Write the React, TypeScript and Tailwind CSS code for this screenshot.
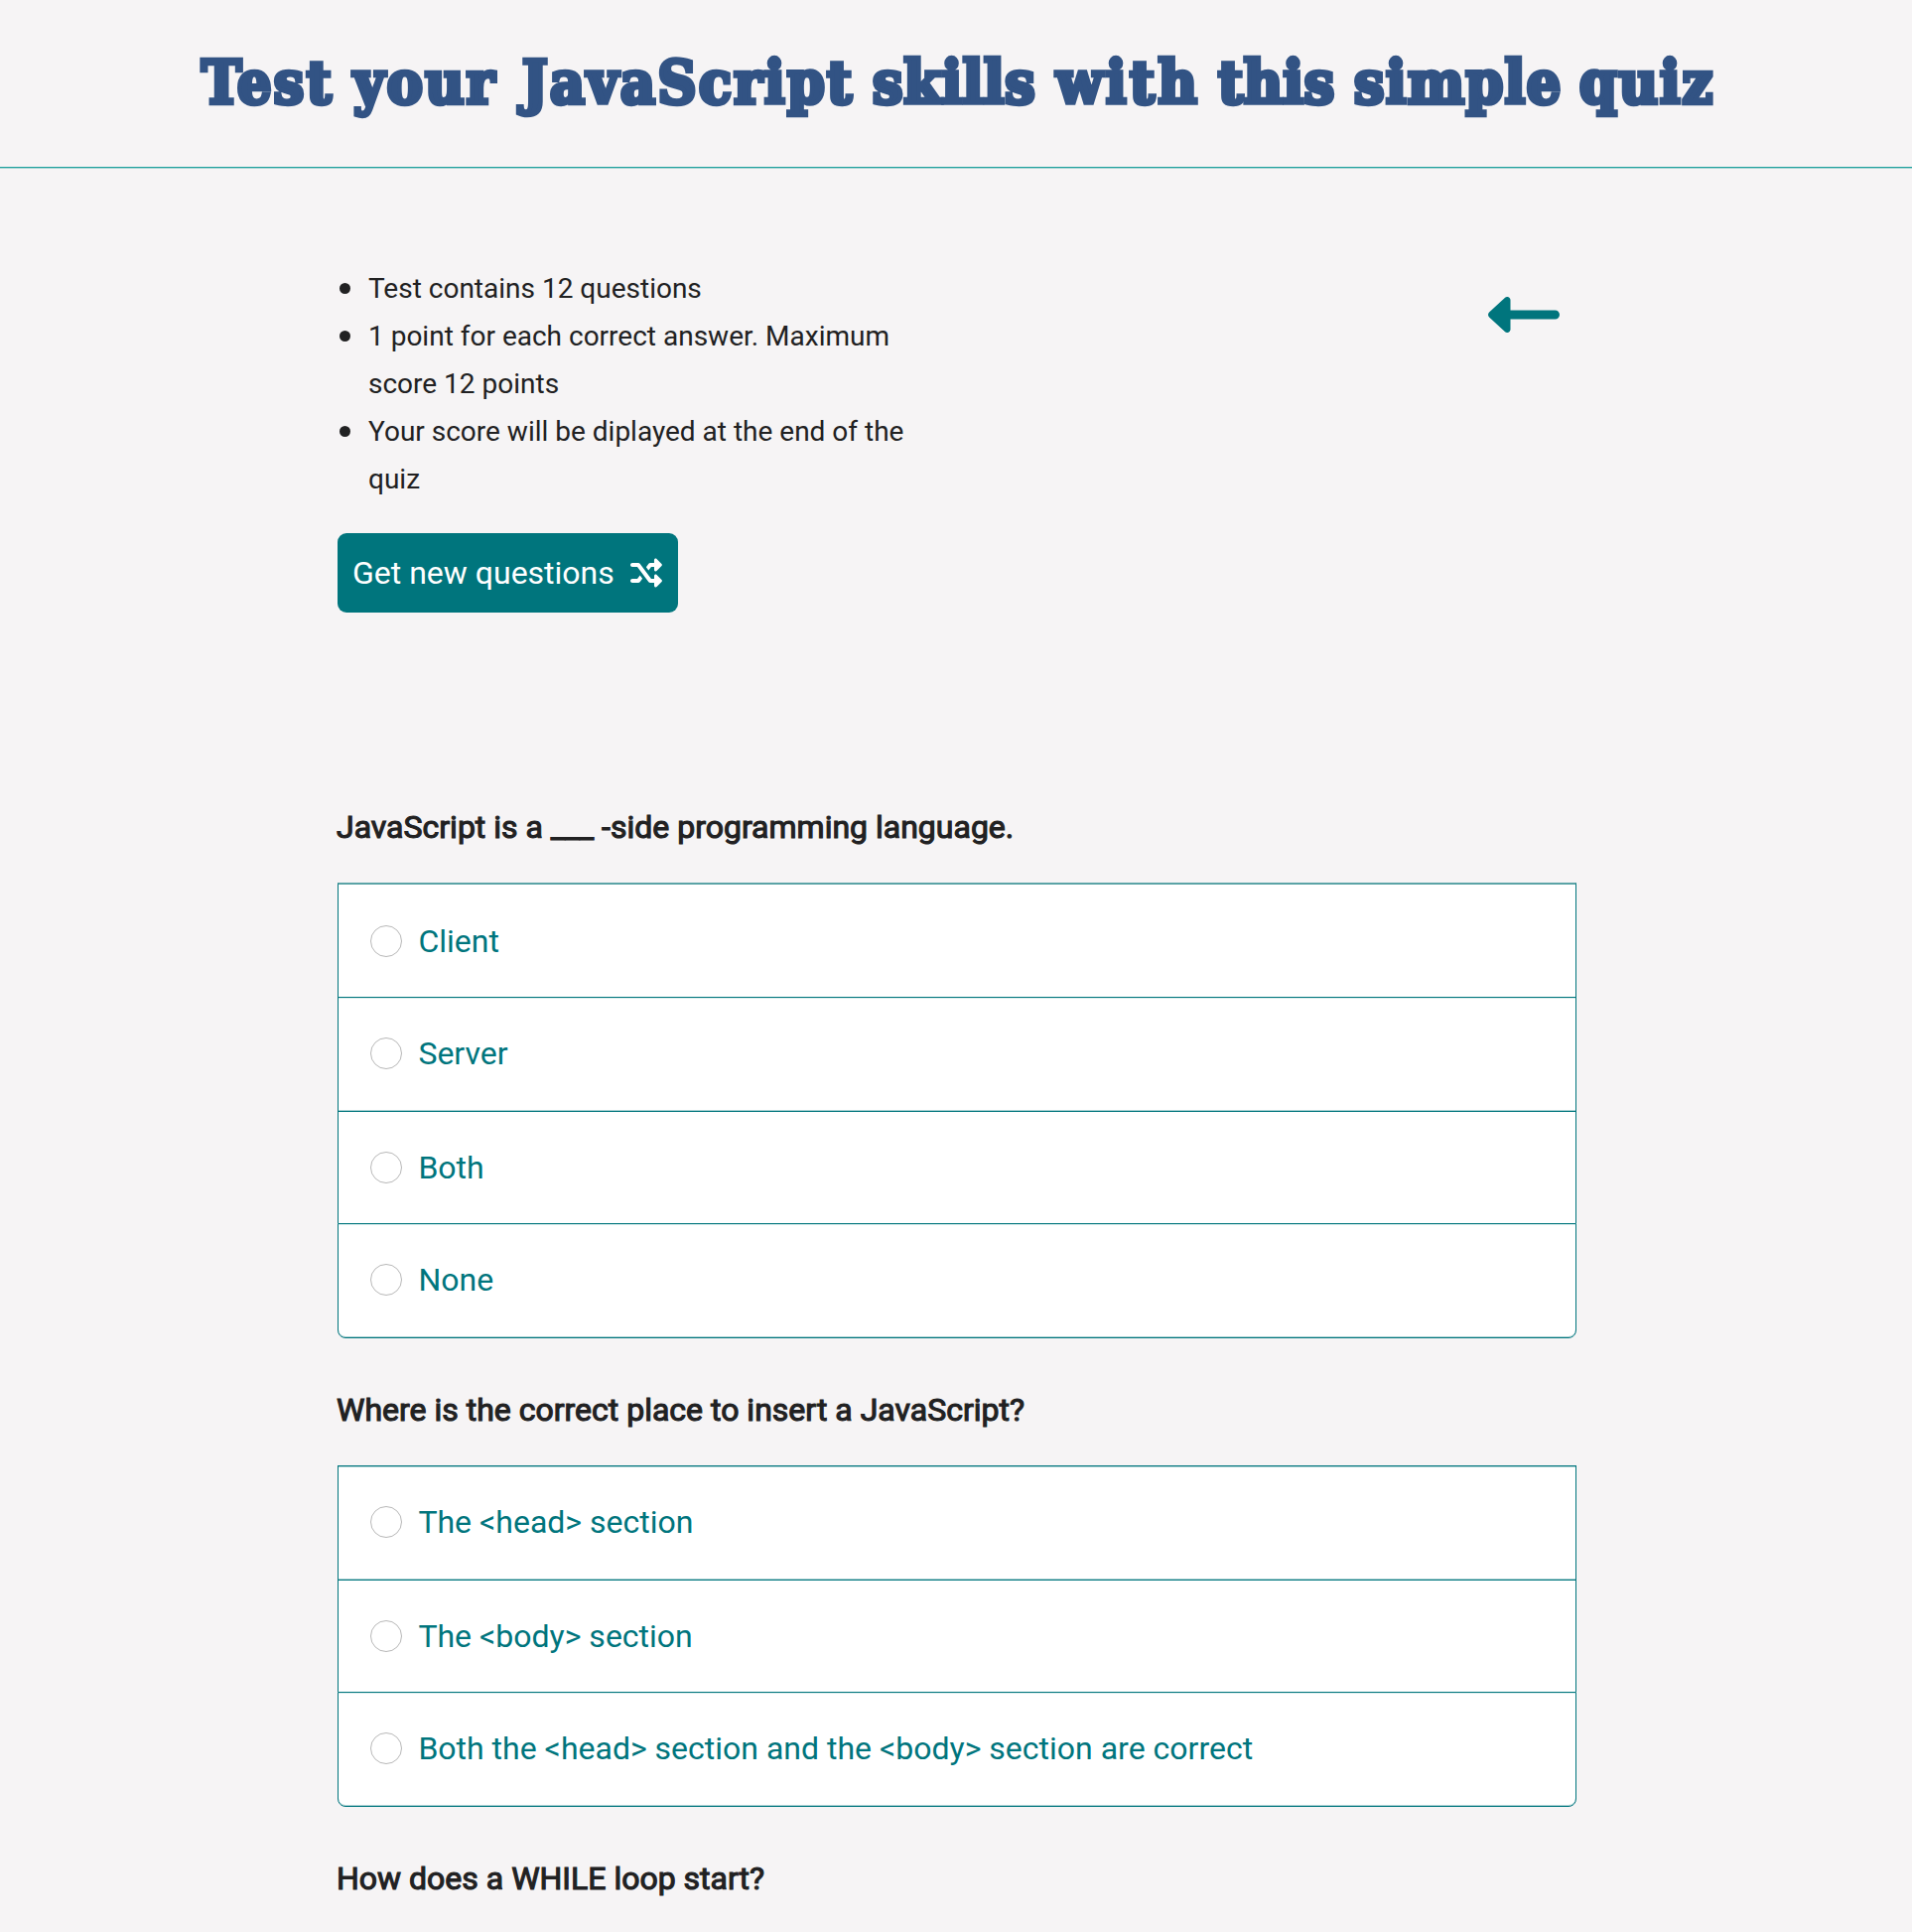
const titleWords = [
  { text: "Test", cls: "w-[153px] tracking-[2.6px]" },
  { text: "your", cls: "w-[170px] tracking-[2.4px]" },
  { text: "JavaScript", cls: "w-[353px] tracking-[2.4px]" },
  { text: "skills", cls: "w-[185px] tracking-[0.8px]" },
  { text: "with", cls: "w-[163px] tracking-[3.5px]" },
  { text: "this", cls: "w-[137px] tracking-[0.7px]" },
  { text: "simple", cls: "w-[227px] tracking-[1.5px]" },
  { text: "quiz", cls: "w-[140px] tracking-[2px]" },
];

const rules = [
  "Test contains 12 questions",
  "1 point for each correct answer. Maximum score 12 points",
  "Your score will be diplayed at the end of the quiz",
];

type Option = { label: string; cls: string };
type Question = { title: string; options: Option[] };

const questions: Question[] = [
  {
    title: "JavaScript is a ___ -side programming language.",
    options: [
      { label: "Client", cls: "h-[115px] border-t-2 border-t-[#5ba3a6] pt-[41px]" },
      { label: "Server", cls: "h-[115px] pt-10 shadow-[inset_0_1px_#d9ecec,inset_0_-1px_#a9d0d2]" },
      { label: "Both", cls: "h-[113px] pt-10" },
      { label: "None", cls: "h-[116px] rounded-b-lg border-b pt-10 shadow-[inset_0_1px_#d9ecec,inset_0_-1px_#a9d0d2]" },
    ],
  },
  {
    title: "Where is the correct place to insert a JavaScript?",
    options: [
      { label: "The <head> section", cls: "h-[115px] pt-10 shadow-[inset_0_1px_#a9d0d2,inset_0_-1px_#a9d0d2]" },
      { label: "The <body> section", cls: "h-[113px] pt-10" },
      {
        label: "Both the <head> section and the <body> section are correct",
        cls: "h-[116px] rounded-b-lg border-b pt-10 shadow-[inset_0_1px_#d9ecec,inset_0_-1px_#a9d0d2]",
      },
    ],
  },
];

function QuestionTitle({ children }: { children: string }) {
  return (
    <h2 className="-ml-px text-[32px] leading-[48px] text-[#212122] [-webkit-text-stroke:1.1px_#212122]">
      {children}
    </h2>
  );
}

function OptionRow({ label, cls }: Option) {
  return (
    <label className={`flex items-start gap-4 border-x border-t border-[#00757d] bg-white pl-[32.4px] ${cls}`}>
      <input
        type="radio"
        className="size-8 shrink-0 appearance-none rounded-full border-[1.5px] border-[#b8b8b8] bg-white"
      />
      <span className="text-[32px] leading-8 text-[#00757d]">{label}</span>
    </label>
  );
}

function ShuffleIcon() {
  return (
    <svg viewBox="0 0 512 512" className="size-8 shrink-0 fill-current">
      <path d="M424.1 287c-15.13-15.12-40.1-4.426-40.1 16.97V352H336L153.6 108.8C147.6 100.8 138.1 96 128 96H32C14.31 96 0 110.3 0 128s14.31 32 32 32h80l182.4 243.2C300.4 411.3 309.9 416 320 416h63.97v47.94c0 21.39 25.86 32.12 40.99 17l79.1-79.98c9.387-9.387 9.387-24.59 0-33.97L424.1 287zM336 160h47.97v48.03c0 21.39 25.87 32.09 40.1 16.97l79.1-79.98c9.387-9.391 9.385-24.59-.0013-33.97l-79.1-79.98c-15.13-15.12-40.99-4.391-40.99 17V96H320c-10.06 0-19.56 4.75-25.59 12.81L254 162.7L293.1 216L336 160zM112 352H32c-17.69 0-32 14.31-32 32s14.31 32 32 32h96c10.06 0 19.56-4.75 25.59-12.81l40.4-53.87L154 296L112 352z" />
    </svg>
  );
}

export default function App() {
  return (
    <div className="h-[1946px] w-full overflow-hidden bg-[#f6f4f5] font-['Roboto',sans-serif] text-[#212122]">
      <header className="flex h-[169px] border-b border-[#1fa19d] pt-[39px] pl-[203px] shadow-[0_1px_#a9d5d5]">
        <h1 className="flex font-['DejaVu_Serif_Condensed','DejaVu_Serif',serif] text-[60px] leading-[88px] font-bold text-[#325384] [-webkit-text-stroke:4.5px_#325384]">
          {titleWords.map((w) => (
            <span key={w.text} className={`shrink-0 whitespace-nowrap ${w.cls}`}>
              {w.text}
            </span>
          ))}
        </h1>
      </header>

      <main className="ml-[340px] w-[1248px]">
        <section className="flex justify-between pt-[98px]">
          <div className="w-[594px]">
            <ul className="flex flex-col text-[28px] leading-[48px]">
              {rules.map((r) => (
                <li key={r} className="flex">
                  <span className="mt-[18px] mr-[18px] ml-[2px] size-[11px] shrink-0 rounded-full bg-[#212122]" />
                  <span>{r}</span>
                </li>
              ))}
            </ul>
            <button className="mt-[30px] flex h-[80px] w-[342.5px] items-center gap-4 rounded-[9px] bg-[#00757d] pb-px pl-[15px] text-[32px] whitespace-nowrap text-white">
              Get new questions
              <ShuffleIcon />
            </button>
          </div>
          <svg viewBox="0 0 512 512" className="mt-[14px] mr-[17px] size-[72px] fill-[#00757d]">
            <path d="M512 256C512 273.7 497.7 288 480 288H160v72c0 9.5-5.7 18.2-14.4 22c-8.8 3.8-19 2.1-25.9-4.5l-112-104c-10.2-9.5-10.2-25.7 0-35.2l112-104c6.9-6.6 17.1-8.3 25.9-4.5c8.8 3.8 14.4 12.5 14.4 22v72H480C497.7 224 512 238.3 512 256z" />
          </svg>
        </section>

        <section className="mt-[192px] flex flex-col gap-12">
          {questions.map((q) => (
            <article key={q.title} className="flex flex-col gap-8">
              <QuestionTitle>{q.title}</QuestionTitle>
              <div className="flex flex-col">
                {q.options.map((o) => (
                  <OptionRow key={o.label} {...o} />
                ))}
              </div>
            </article>
          ))}
          <QuestionTitle>How does a WHILE loop start?</QuestionTitle>
        </section>
      </main>
    </div>
  );
}
